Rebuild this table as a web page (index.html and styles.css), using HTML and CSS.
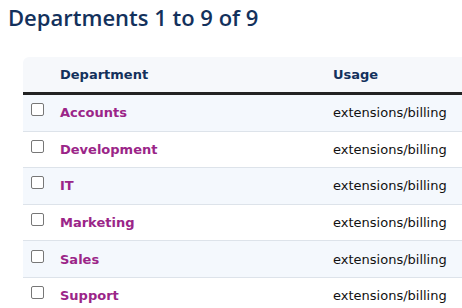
FILE: index.html
```html
<!DOCTYPE html>
<html>
<head>
<meta charset="utf-8">
<link rel="stylesheet" href="styles.css">
</head>
<body>
<h1 class="title">Departments 1 to 9 of 9</h1>
<div class="wrap">
<table class="grid">
<thead>
<tr><th class="cb"></th><th class="dept">Department</th><th class="usage">Usage</th></tr>
</thead>
<tbody>
<tr><td class="cb"><span class="box"></span></td><td class="dept"><a href="#">Accounts</a></td><td class="usage">extensions/billing</td></tr>
<tr><td class="cb"><span class="box"></span></td><td class="dept"><a href="#">Development</a></td><td class="usage">extensions/billing</td></tr>
<tr><td class="cb"><span class="box"></span></td><td class="dept"><a href="#">IT</a></td><td class="usage">extensions/billing</td></tr>
<tr><td class="cb"><span class="box"></span></td><td class="dept"><a href="#">Marketing</a></td><td class="usage">extensions/billing</td></tr>
<tr><td class="cb"><span class="box"></span></td><td class="dept"><a href="#">Sales</a></td><td class="usage">extensions/billing</td></tr>
<tr><td class="cb"><span class="box"></span></td><td class="dept"><a href="#">Support</a></td><td class="usage">extensions/billing</td></tr>
</tbody>
</table>
</div>
</body>
</html>
```
FILE: styles.css
```css
html, body { margin: 0; padding: 0; background: #fff; }
body { padding: 0 0 0 8px; font-family: "DejaVu Sans", Verdana, sans-serif; font-size: 13px; color: #111; overflow: hidden; }
.title { margin: 0; padding-top: 2px; font-family: "Open Sans", sans-serif; font-weight: 600; font-size: 22px; line-height: 30px; color: #13315c; }
.wrap { margin: 25px 0 0 15px; width: 460px; }
.grid { border-collapse: collapse; width: 100%; }
.grid thead tr { background: #f6f8fb; }
.grid th { height: 35px; text-align: left; font-weight: bold; color: #13315c; border-bottom: 3px solid #222; padding: 0; }
.grid thead th:first-child { border-top-left-radius: 6px; }
.grid td { height: 35.6px; padding: 0; border-bottom: 1px solid #dde3ea; }
.grid tbody tr:nth-child(odd) { background: #f4f8fd; }
.cb { width: 37px; }
.box { display: block; width: 11px; height: 11px; margin: 0 0 0 8px; border: 1px solid #777; border-radius: 2px; background: #fff; position: relative; top: -3px; }
.dept { width: 273px; }
.dept a { color: #9b2588; font-weight: bold; text-decoration: none; }
.usage { white-space: nowrap; }
```
